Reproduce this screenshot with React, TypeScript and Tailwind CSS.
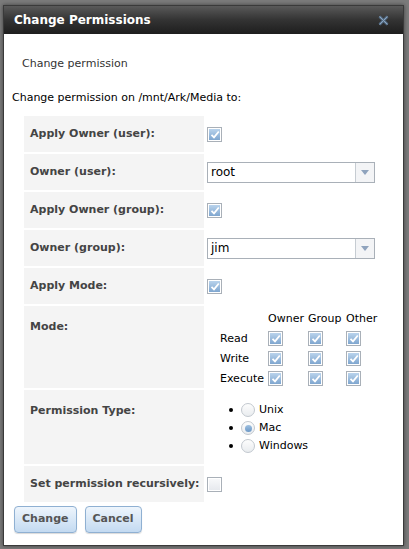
import { useState, Fragment } from 'react';

const font = { fontFamily: '"DejaVu Sans", Verdana, sans-serif' };

function Check({ checked = true }: { checked?: boolean }) {
  return (
    <span className="inline-flex h-[15px] w-[15px] items-center justify-center border border-[#a9b0b8] bg-white p-px">
      <span
        className={`flex h-full w-full items-center justify-center ${
          checked ? 'bg-gradient-to-b from-[#b9d3ec] to-[#7fa6cf]' : 'bg-gradient-to-b from-[#f7f8fa] to-[#e6e9ee]'
        }`}
      >
        {checked && (
          <svg width="10" height="9" viewBox="0 0 10 9">
            <path d="M1.5 4.8 L4 7.3 L8.8 1.5" fill="none" stroke="white" strokeWidth="1.8" />
          </svg>
        )}
      </span>
    </span>
  );
}

function Radio({ checked = false }: { checked?: boolean }) {
  return (
    <span className="inline-flex h-[14px] w-[14px] items-center justify-center rounded-full border border-[#c2c8cf] bg-gradient-to-b from-[#fdfdfd] to-[#e9ecef]">
      {checked && <span className="h-[7px] w-[7px] rounded-full bg-gradient-to-b from-[#9fc0e0] to-[#6b98c6]" />}
    </span>
  );
}

function Select({ value }: { value: string }) {
  return (
    <div className="flex h-[21px] w-[168px] border border-[#a9b0b8] bg-white text-[12px] text-black">
      <span className="flex flex-1 items-center pl-[3px]">{value}</span>
      <span className="flex w-[19px] items-center justify-center border-l border-[#c6ccd2] bg-[#f3f4f6]">
        <svg width="8" height="5" viewBox="0 0 8 5">
          <path d="M0 0 H8 L4 5 Z" fill="#8fa3bd" />
        </svg>
      </span>
    </div>
  );
}

function Row({ label, children, tall }: { label: string; children: React.ReactNode; tall?: string }) {
  return (
    <div className={`flex ${tall ?? 'h-[36px]'}`}>
      <div
        className={`flex w-[180px] shrink-0 bg-[#f4f4f4] pl-[6px] text-[11px] font-bold text-[#444] ${
          tall ? 'pt-[13px]' : 'items-center'
        }`}
      >
        {label}
      </div>
      <div className={`flex flex-1 pl-[3px] ${tall ? '' : 'items-center'}`}>{children}</div>
    </div>
  );
}

export default function App() {
  const [perm, setPerm] = useState('Mac');
  const modes = ['Read', 'Write', 'Execute'];
  return (
    <div className="h-[549px] w-[409px] overflow-hidden bg-[#7b7b7b] pt-[5px] pl-[3px]" style={font}>
      <div className="h-[541px] w-[401px] border border-[#3a3a3a] bg-white shadow-[0_0_4px_rgba(0,0,0,0.5)]">
        <div className="flex h-[28px] items-center justify-between bg-gradient-to-b from-[#5a5a5a] via-[#333] to-[#1e1e1e] pr-[14px] pl-[10px]">
          <span className="text-[12px] font-bold text-white">Change Permissions</span>
          <svg width="11" height="11" viewBox="0 0 11 11">
            <path d="M1.5 1.5 L9.5 9.5 M9.5 1.5 L1.5 9.5" stroke="#556f8a" strokeWidth="2.6" />
            <path d="M1.5 1.5 L9.5 9.5 M9.5 1.5 L1.5 9.5" stroke="#8ea5bc" strokeWidth="1" />
          </svg>
        </div>

        <div className="pt-[22px] pl-[18px] text-[11px] text-[#333]">Change permission</div>
        <div className="pt-[17px] pl-[8px] text-[11px] text-black">Change permission on /mnt/Ark/Media to:</div>

        <div className="mt-[10px] ml-[20px] flex w-[352px] flex-col gap-[2px]">
          <Row label="Apply Owner (user):">
            <Check />
          </Row>
          <Row label="Owner (user):">
            <Select value="root" />
          </Row>
          <Row label="Apply Owner (group):">
            <Check />
          </Row>
          <Row label="Owner (group):">
            <Select value="jim" />
          </Row>
          <Row label="Apply Mode:">
            <Check />
          </Row>
          <Row label="Mode:" tall="h-[82px]">
            <div className="pt-[5px] pl-[13px] text-[11px] leading-[15px] text-black">
              <div className="grid grid-cols-[48px_40px_38px_36px] items-center gap-y-[5px]">
                <span />
                <span>Owner</span>
                <span>Group</span>
                <span>Other</span>
                {modes.map((m) => (
                  <Fragment key={m}>
                    <span>{m}</span>
                    <Check />
                    <Check />
                    <Check />
                  </Fragment>
                ))}
              </div>
            </div>
          </Row>
          <Row label="Permission Type:" tall="h-[74px]">
            <ul className="flex flex-col gap-[2px] pt-[12px] pl-[22px] text-[11px] leading-[16px] text-black">
              {['Unix', 'Mac', 'Windows'].map((p) => (
                <li key={p} className="flex items-center gap-[4px]" onClick={() => setPerm(p)}>
                  <span className="h-[4px] w-[4px] rounded-full bg-black" />
                  <span className="ml-[4px] flex">
                    <Radio checked={perm === p} />
                  </span>
                  <span>{p}</span>
                </li>
              ))}
            </ul>
          </Row>
          <Row label="Set permission recursively:">
            <Check checked={false} />
          </Row>
        </div>

        <div className="mt-[4px] ml-[10px] flex gap-[8px]">
          {['Change', 'Cancel'].map((b) => (
            <button
              key={b}
              className="h-[27px] rounded-[4px] border border-[#8fb0d2] bg-gradient-to-b from-[#eef5fc] to-[#c3daf1] px-[7px] text-[11px] font-bold text-[#555] shadow-[0_1px_1px_rgba(0,0,0,0.15)]"
            >
              {b}
            </button>
          ))}
        </div>
      </div>
    </div>
  );
}
